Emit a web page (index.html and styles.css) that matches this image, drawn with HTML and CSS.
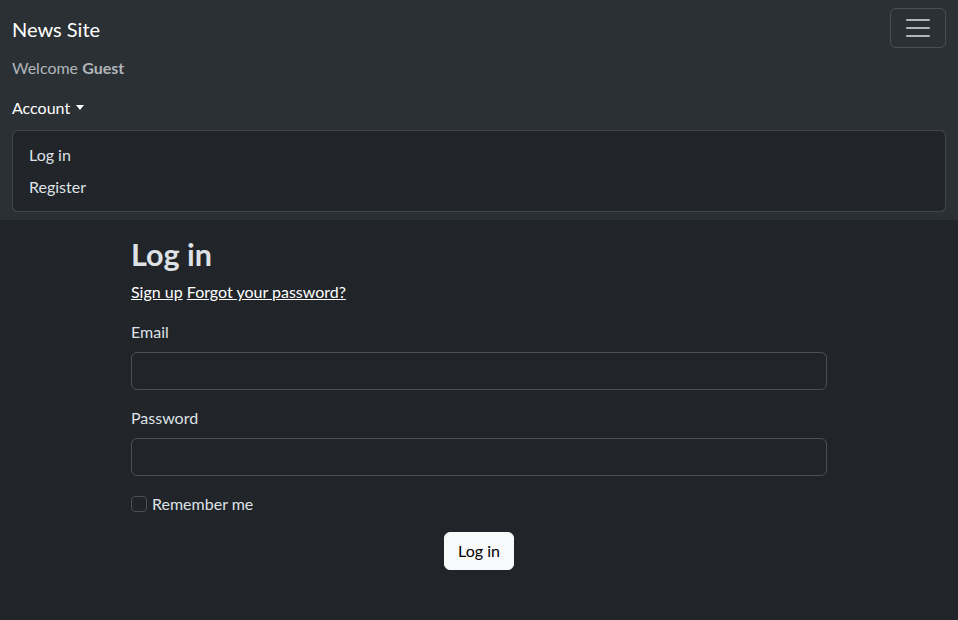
FILE: index.html
```html
<!DOCTYPE html>
<html lang="en">
<head>
<meta charset="utf-8">
<title>Log in - News Site</title>
<link rel="stylesheet" href="styles.css">
</head>
<body>
<header>
  <nav class="navbar">
    <div class="navbar-inner">
      <div class="navbar-top">
        <a class="brand" href="#">News Site</a>
        <button class="toggler" type="button" aria-label="Toggle navigation">
          <svg width="30" height="30" viewBox="0 0 30 30" aria-hidden="true"><path d="M4 7h22M4 15h22M4 23h22" stroke="rgba(222,226,230,0.75)" stroke-width="2" stroke-linecap="round" fill="none"/></svg>
        </button>
      </div>
      <div class="collapse">
        <span class="navbar-text">Welcome <b>Guest</b></span>
        <div class="nav-item">
          <a class="nav-link" href="#">Account<span class="caret"></span></a>
          <ul class="dropdown-menu">
            <li><a class="dropdown-item" href="#">Log in</a></li>
            <li><a class="dropdown-item" href="#">Register</a></li>
          </ul>
        </div>
      </div>
    </div>
  </nav>
</header>
<main class="container">
  <h2 class="title">Log in</h2>
  <p class="links"><a href="#">Sign up</a> <a href="#">Forgot your password?</a></p>
  <form class="form">
    <div class="field">
      <label class="form-label" for="email">Email</label>
      <input class="form-control" id="email" type="email">
    </div>
    <div class="field">
      <label class="form-label" for="password">Password</label>
      <input class="form-control" id="password" type="password">
    </div>
    <div class="field check">
      <input class="check-input" id="remember" type="checkbox">
      <label class="check-label" for="remember">Remember me</label>
    </div>
    <div class="actions">
      <button class="btn-light" type="submit">Log in</button>
    </div>
  </form>
</main>
</body>
</html>
```
FILE: styles.css
```css
* { box-sizing: border-box; }
html, body { margin: 0; }
body {
  background: #212529;
  color: #dee2e6;
  font-family: Lato, "Noto Sans", sans-serif;
  font-size: 16px;
  line-height: 1.5;
}
a { color: #fff; }
.navbar {
  background: #2b3035;
  padding: 8px 0;
  margin-bottom: 16px;
}
.navbar-inner { padding: 0 12px; }
.navbar-top {
  display: flex;
  justify-content: space-between;
  align-items: center;
}
.brand {
  color: #fff;
  text-decoration: none;
  font-size: 20px;
  line-height: 30px;
  padding: 6px 0 4px;
}
.toggler {
  width: 56px;
  height: 40px;
  padding: 4px 12px;
  background: transparent;
  border: 1px solid rgba(255,255,255,0.15);
  border-radius: 6px;
  display: flex;
  align-items: center;
  justify-content: center;
}
.toggler svg { display: block; }
.collapse { display: flex; flex-direction: column; }
.navbar-text {
  padding: 8px 0;
  color: rgba(222,226,230,0.75);
}
.navbar-text b { font-weight: 700; }
.nav-link {
  display: inline-block;
  padding: 8px 0;
  color: #fff;
  text-decoration: none;
}
.caret {
  display: inline-block;
  margin-left: 6px;
  vertical-align: 4px;
  border-top: 5px solid currentColor;
  border-left: 4.5px solid transparent;
  border-right: 4.5px solid transparent;
}
.dropdown-menu {
  list-style: none;
  margin: 2px 0 0;
  padding: 8px 0;
  background: #212529;
  border: 1px solid rgba(255,255,255,0.15);
  border-radius: 6px;
}
.dropdown-item {
  display: block;
  padding: 4px 16px;
  color: #dee2e6;
  text-decoration: none;
}
.container {
  width: 720px;
  margin: 0 auto;
  padding: 0 12px 16px;
}
.title {
  margin: 0 0 8px;
  padding-top: 1px;
  font-size: 30.5px;
  line-height: 34.76px;
  font-weight: 700;
  color: #dee2e6;
}
.links { margin: 0 0 16px; }
.field { margin-bottom: 16px; }
.form-label { display: block; margin-bottom: 8px; }
.form-control {
  display: block;
  width: 100%;
  height: 38px;
  padding: 6px 12px;
  font: inherit;
  color: #dee2e6;
  background: #212529;
  border: 1px solid #495057;
  border-radius: 6px;
}
.check { display: flex; align-items: center; gap: 5px; min-height: 24px; }
.check-input {
  appearance: none;
  width: 16px;
  height: 16px;
  margin: 0;
  background: #212529;
  border: 1px solid #495057;
  border-radius: 4px;
}
.actions { display: flex; justify-content: center; }
.btn-light {
  font: inherit;
  color: #000;
  background: #f8f9fa;
  border: 1px solid #f8f9fa;
  border-radius: 6px;
  padding: 6px 13px;
}
```
